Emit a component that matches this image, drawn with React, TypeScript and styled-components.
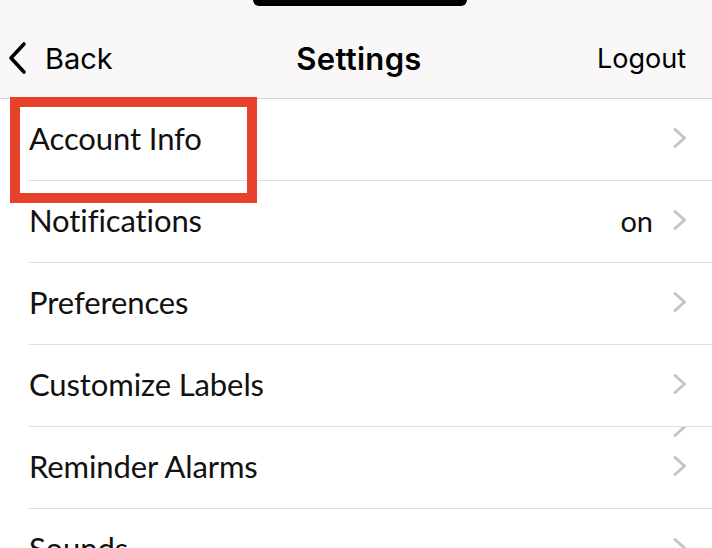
import styled, { createGlobalStyle } from "styled-components";

const GlobalStyle = createGlobalStyle`
  html, body {
    margin: 0;
    padding: 0;
    background: #ffffff;
    overflow: hidden;
  }
  body {
    font-family: "Lato", "Noto Sans", sans-serif;
    -webkit-font-smoothing: antialiased;
  }
  * {
    box-sizing: border-box;
  }
`;

const Screen = styled.div`
  width: 712px;
  height: 548px;
  overflow: hidden;
  position: relative;
  background: #ffffff;
`;

const Header = styled.header`
  height: 99px;
  background: #f9f7f8;
  border-bottom: 1px solid #d4d3d5;
  display: flex;
  flex-direction: column;
`;

const NotchRow = styled.div`
  height: 18px;
  display: flex;
  justify-content: center;
  padding-left: 8px;
`;

const Notch = styled.div`
  width: 214px;
  height: 6px;
  background: #000;
  border-radius: 0 0 14px 14px;
`;

const NavBar = styled.nav`
  flex: 1;
  display: grid;
  grid-template-columns: 1fr auto 1fr;
  align-items: center;
  padding: 0 26px 0 8px;
  font-family: "Inter", "Roboto", sans-serif;
  color: #000;
`;

const BackButton = styled.button`
  justify-self: start;
  display: flex;
  align-items: center;
  gap: 17px;
  background: none;
  border: none;
  padding: 0;
  font: inherit;
  font-size: 29px;
  color: #000;
`;

const Title = styled.h1`
  margin: 0 0 0 24px;
  font-size: 31px;
  font-weight: 600;
  letter-spacing: 0.3px;
`;

const NavAction = styled.button`
  justify-self: end;
  background: none;
  border: none;
  padding: 0;
  font: inherit;
  font-size: 27px;
  color: #000;
`;

const List = styled.ul`
  list-style: none;
  margin: 0;
  padding: 0;
`;

const Row = styled.li`
  position: relative;
  height: 82px;
  margin-left: 29px;
  padding-right: 24px;
  padding-bottom: 3px;
  display: flex;
  align-items: center;
  border-bottom: 1px solid #dedede;
  overflow: hidden;
`;

const Label = styled.span`
  flex: 1;
  font-size: 31px;
  color: #111;
  letter-spacing: -0.1px;
`;

const Value = styled.span`
  font-size: 29px;
  color: #111;
  margin-right: 19px;
`;

const Chevron = styled.svg<{ $clipped?: boolean }>`
  width: 16px;
  height: 24px;
  flex-shrink: 0;
  ${(p) =>
    p.$clipped &&
    `
    position: absolute;
    right: 24px;
    top: -12px;
  `}
`;

const Highlight = styled.div`
  position: absolute;
  left: 10px;
  top: 97px;
  width: 247px;
  height: 106px;
  border: 10px solid #e8412b;
  pointer-events: none;
`;

function ChevronIcon({ clipped }: { clipped?: boolean }) {
  return (
    <Chevron $clipped={clipped} viewBox="0 0 16 24" aria-hidden="true">
      <path
        d="M3 3.5 L12.5 12 L3 20.5"
        fill="none"
        stroke="#c4c4c7"
        strokeWidth={3}
        strokeLinecap="round"
        strokeLinejoin="round"
      />
    </Chevron>
  );
}

const items = [
  { label: "Account Info" },
  { label: "Notifications", value: "on" },
  { label: "Preferences" },
  { label: "Customize Labels" },
  { label: "Reminder Alarms", ghost: true },
  { label: "Sounds" },
];

export default function App() {
  return (
    <Screen>
      <GlobalStyle />
      <Header>
        <NotchRow>
          <Notch />
        </NotchRow>
        <NavBar>
          <BackButton>
            <svg width="20" height="34" viewBox="0 0 20 34" aria-hidden="true">
              <path
                d="M16 3 L3 17 L16 31"
                fill="none"
                stroke="#000"
                strokeWidth={3.6}
                strokeLinecap="round"
                strokeLinejoin="round"
              />
            </svg>
            Back
          </BackButton>
          <Title>Settings</Title>
          <NavAction>Logout</NavAction>
        </NavBar>
      </Header>
      <List>
        {items.map((item) => (
          <Row key={item.label}>
            {item.ghost && <ChevronIcon clipped />}
            <Label>{item.label}</Label>
            {item.value && <Value>{item.value}</Value>}
            <ChevronIcon />
          </Row>
        ))}
      </List>
      <Highlight />
    </Screen>
  );
}
